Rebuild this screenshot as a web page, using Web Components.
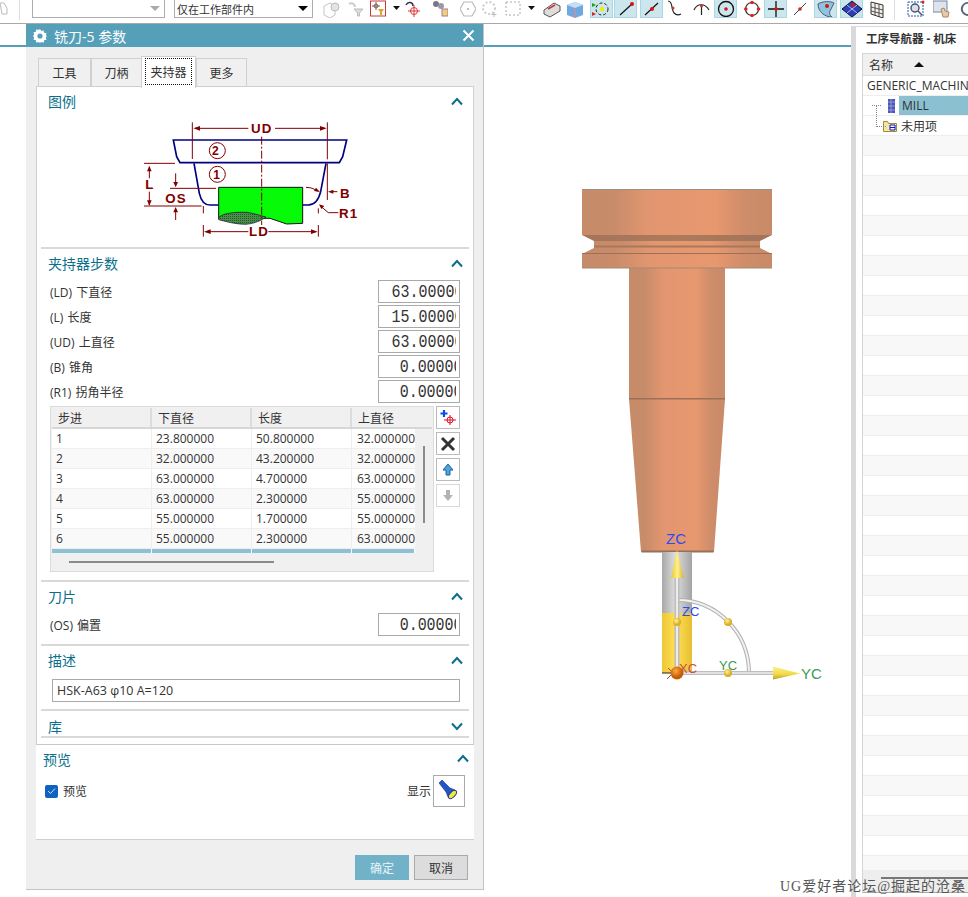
<!doctype html>
<html lang="zh">
<head>
<meta charset="utf-8">
<title>铣刀-5 参数</title>
<style>
	html, body { margin: 0; padding: 0; background: #fff; }
	body { font: 12px "Open Sans", "Noto Sans CJK SC", sans-serif; color: #333; }
</style>
</head>
<body>
<ug-app>
	<ug-toolbar></ug-toolbar>
	<ug-workspace>
		<cad-view></cad-view>
		<op-nav></op-nav>
	</ug-workspace>
	<tool-dialog slot="over" heading="铣刀-5 参数">
		<holder-diagram></holder-diagram>
		<step-table></step-table>
	</tool-dialog>
	<ug-mark slot="over">UG爱好者论坛@掘起的沧桑</ug-mark>
</ug-app>

<script>
const FONT = '"Open Sans", "Noto Sans CJK SC", sans-serif';

const chevron = (down) => `<svg width="12" height="9" viewBox="0 0 12 9"><polyline points="${down ? '1,1.5 6,7 11,1.5' : '1,7.5 6,2 11,7.5'}" fill="none" stroke="#0b6f8c" stroke-width="2"/></svg>`;

const TOOL_ICONS = {
	cubes: `<path d="M1 6 7 3l5 3v9l-5 3-6-3z" fill="none" stroke="#c4c4c4"/><circle cx="12" cy="7" r="4" fill="#e4e4e4" stroke="#bbb"/>`,
	filterGrey: `<path d="M1 4c3-2 6 0 6 3" fill="none" stroke="#ccc" stroke-width="2"/><path d="M6 9h9l-3.500 4v3h-2v-3z" fill="#ddd" stroke="#bbb"/>`,
	pointFilter: `<rect x="0.500" y="1" width="15" height="15" fill="#fff" stroke="#c8393f"/><path d="M6 2v8M2 6h8" stroke="#665" /><circle cx="6" cy="6" r="2" fill="none" stroke="#955"/><path d="M8 9h6l-2 3v3h-2v-3z" fill="#e6a22e"/>`,
	undoPoint: `<path d="M1 5c2-4 7-3 7 1" fill="none" stroke="#334" stroke-width="1.500"/><circle cx="9" cy="11" r="3.500" fill="none" stroke="#d33"/><path d="M9 5v12M3 11h12" stroke="#d33"/>`,
	gears: `<circle cx="4" cy="4" r="3" fill="#778"/><circle cx="9" cy="6" r="3" fill="#99a"/><rect x="10" y="9" width="6" height="7" fill="#eed27a" stroke="#a79"/>`,
	hex: `<path d="M4 2h8l4 7-4 7H4L0 9z" fill="none" stroke="#bbb" stroke-width="1.200"/><circle cx="8" cy="9" r="1" fill="#aaa"/>`,
	ringDots: `<circle cx="8" cy="8" r="6" fill="none" stroke="#ccc" stroke-dasharray="2 2" stroke-width="2"/><path d="M13 12v5M10.500 14.500h5" stroke="#bbb"/>`,
	rectDash: `<rect x="1" y="2" width="14" height="13" fill="none" stroke="#aaa" stroke-dasharray="2 2"/>`,
	caret: `<path d="M1 6h7L4.500 10z" fill="#111"/>`,
	box3d: `<path d="M1 10 11 3l6 3v5L7 17l-6-3z" fill="#ddd" stroke="#555"/><path d="M5 9l7-4" stroke="#c33" stroke-width="1.500"/>`,
	cubeBlue: `<path d="M0 5l8-3 8 3v10l-8 3-8-3z" fill="#6fa9e0"/><path d="M0 5l8 3 8-3-8-3z" fill="#c7dff5"/><path d="M8 8v10" stroke="#ee8888"/>`,
	snapNodes: `<circle cx="11" cy="9" r="6" fill="none" stroke="#222" stroke-dasharray="3 2"/><circle cx="11" cy="9" r="2.200" fill="#ee0"/><path d="M1 3l4 2-4 2z" fill="#1a1"/><path d="M1 12l4 2-4 2z" fill="#d22"/>`,
	lineEnd: `<path d="M5 15 17 4" stroke="#111" stroke-width="1.200"/><circle cx="17" cy="4" r="2" fill="#d11"/>`,
	lineMid: `<path d="M4 15 17 3" stroke="#111" stroke-width="1.200"/><circle cx="11" cy="9" r="2" fill="#d11"/>`,
	curve: `<path d="M1 1c5 0 3 8 6 12 2 2 5 2 7 1" fill="none" stroke="#222" stroke-width="1.200"/><circle cx="6" cy="8" r="1.500" fill="#c33"/>`,
	arcCross: `<path d="M1 10C4 3 12 3 16 10" fill="none" stroke="#222" stroke-width="1.200"/><path d="M8.500 5v10" stroke="#222" stroke-width="1.200"/><circle cx="8.500" cy="6" r="1.500" fill="#c33"/>`,
	circleCenter: `<circle cx="11" cy="9" r="7.500" fill="none" stroke="#111" stroke-width="1.300"/><circle cx="11" cy="9" r="1.800" fill="#d11"/>`,
	circleQuad: `<circle cx="8" cy="9" r="6.500" fill="none" stroke="#333" stroke-width="1.200"/><g fill="#d22"><circle cx="8" cy="2.500" r="1.800"/><circle cx="8" cy="15.500" r="1.800"/><circle cx="1.800" cy="9" r="1.800"/><circle cx="14.500" cy="9" r="1.800"/></g>`,
	cross: `<path d="M11 1v16M3 9h16" stroke="#111" stroke-width="1.300"/><circle cx="11" cy="9" r="1.800" fill="#d11"/>`,
	slash: `<path d="M1 15 13 3" stroke="#444"/><circle cx="7" cy="9" r="1.800" fill="#d22"/>`,
	faceSnap: `<path d="M3 4c5-3 12-3 16-1l-3 6c-2 3-2 6 1 8-7 0-14-5-14-13z" fill="#8cc6de" stroke="#557"/><circle cx="12" cy="6" r="2" fill="#d11"/>`,
	meshSnap: `<path d="M11 1l10 8-10 8L1 9z" fill="#2c3fb8" stroke="#113"/><path d="M6 5l10 8M16 5 6 13" stroke="#cdf" stroke-width=".8"/><circle cx="12" cy="5" r="2" fill="#d11"/>`,
	grid: `<path d="M1 2l12 3v13L1 14z" fill="#f4efe6" stroke="#333"/><path d="M5 3v12M9 4v13M1 7l12 3M1 11l12 3" stroke="#333" stroke-width=".8"/>`,
	viewSel: `<rect x="1" y="2" width="15" height="14" fill="none" stroke="#25b" stroke-dasharray="2 1"/><circle cx="8" cy="8" r="4" fill="#dde" stroke="#456" stroke-width="1.400"/><path d="M11 11l4 4" stroke="#456" stroke-width="1.500"/><circle cx="16" cy="2" r="1.500" fill="#d22"/>`,
	viewHand: `<rect x="0" y="1" width="14" height="11" fill="#dbe4f0" stroke="#789"/><path d="M8 9l2 8h5l1-5-4-1-1-3z" fill="#e8c9a8" stroke="#a86"/>`,
	rotate: `<path d="M12 3a6 6 0 1 0 4 9" fill="none" stroke="#567" stroke-width="2"/>`
};

class UgApp extends HTMLElement {
	constructor() {
		super();
		this.attachShadow({ mode: 'open' });
	}

	connectedCallback() {
		this.shadowRoot.innerHTML = `
			<style>
				:host { display: flex; flex-direction: column; position: relative; width: 968px; height: 897px; overflow: hidden; background: #fff; }
			</style>
			<slot></slot>
			<slot name="over"></slot>
		`;
	}
}

class UgToolbar extends HTMLElement {
	constructor() {
		super();
		this.attachShadow({ mode: 'open' });
	}

	// [gap before, width, icon, highlighted]
	get items() {
		return [
			[323, 18, 'cubes'], [7, 16, 'filterGrey'], [6, 16, 'pointFilter'], [6, 9, 'caret'], [4, 16, 'undoPoint'],
			[11, 16, 'gears'], [12, 16, 'hex'], [5, 16, 'ringDots'], [8, 16, 'rectDash'], [6, 8, 'caret'],
			[8, 18, 'box3d'], [6, 17, 'cubeBlue'], [6, 23, 'snapNodes', 1], [1, 23, 'lineEnd', 1], [3, 23, 'lineMid', 1],
			[4, 17, 'curve'], [9, 17, 'arcCross'], [4, 23, 'circleCenter', 1], [7, 17, 'circleQuad'], [3, 23, 'cross', 1],
			[6, 15, 'slash'], [6, 23, 'faceSnap', 1], [3, 23, 'meshSnap', 1], [7, 15, 'grid']
		];
	}

	icon([gap, width, name, on]) {
		const frame = on ? 22 : width;
		return `<span class="btn${on ? ' on' : ''}" style="margin-left:${gap}px;width:${width}px"><svg width="${frame}" height="18" viewBox="0 0 ${frame} 18">${TOOL_ICONS[name]}</svg></span>`;
	}

	connectedCallback() {
		this.shadowRoot.innerHTML = `
			<style>
				:host { display: block; height: 24px; box-sizing: border-box; border-bottom: 1px solid #a8a8a8; background: #fff; overflow: hidden; font-size: 11px; color: #333; }
				.row { display: flex; align-items: flex-start; height: 23px; position: relative; }
				.left { display: flex; position: absolute; left: 0; top: 0; height: 18px; }
				.combo { box-sizing: border-box; height: 18px; border: 1px solid #adadad; border-top: 0; display: flex; justify-content: space-between; align-items: center; padding: 0 4px 0 2px; }
				.combo i { width: 0; height: 0; border: 5px solid transparent; border-top: 5px solid #000; border-bottom: 0; }
				.combo.off i { border-top-color: #aaa; }
				.sep { width: 1px; height: 20px; background: #ddd; }
				.btn { box-sizing: border-box; height: 18px; flex: none; overflow: hidden; display: flex; justify-content: center; align-items: center; }
				.btn svg { flex: none; }
				.btn.on { background: #cbe6ec; border: 1px solid #aad7e1; border-top: 0; }
			</style>
			<div class="row">
				<div class="left">
					<svg width="8" height="18" viewBox="0 0 8 18"><path d="M0 3h4l3 5v6H2z" fill="none" stroke="#bbb"/></svg>
					<span class="sep" style="margin-left:11px"></span>
					<span class="combo off" style="width:133px;margin-left:12px"><span></span><i></i></span>
					<span class="combo" style="width:139px;margin-left:9px"><span>仅在工作部件内</span><i></i></span>
				</div>
				${this.items.map((it) => this.icon(it)).join('')}
				<span class="sep" style="margin-left:9px;flex:none"></span>
				${[[12, 'viewSel'], [8, 'viewHand'], [6, 'rotate']].map(([gap, name]) => this.icon([gap, 18, name])).join('')}
			</div>
		`;
	}
}

class UgWorkspace extends HTMLElement {
	constructor() {
		super();
		this.attachShadow({ mode: 'open' });
	}

	connectedCallback() {
		this.shadowRoot.innerHTML = `
			<style>
				:host { display: flex; flex: 1; min-height: 0; }
			</style>
			<slot></slot>
		`;
	}
}

class CadView extends HTMLElement {
	constructor() {
		super();
		this.attachShadow({ mode: 'open' });
	}

	connectedCallback() {
		this.shadowRoot.innerHTML = `
			<style>
				:host { display: block; position: relative; flex: none; width: 851px; }
				.rule { height: 2px; margin-top: 21px; background: #569fb9; }
				svg { position: absolute; left: 0; top: 0; font-family: "Liberation Sans", sans-serif; }
			</style>
			<div class="rule"></div>
			<svg width="851" height="873" viewBox="0 24 851 873">
				<defs>
					<linearGradient id="cu">
						<stop offset="0" stop-color="#c68b69"/><stop offset=".17" stop-color="#c88c6a"/>
						<stop offset=".35" stop-color="#e2966f"/><stop offset=".7" stop-color="#e8986f"/>
						<stop offset=".85" stop-color="#cf8d6a"/><stop offset="1" stop-color="#c88a68"/>
					</linearGradient>
					<linearGradient id="cuDark">
						<stop offset="0" stop-color="#a3745a"/><stop offset=".5" stop-color="#ad7a5c"/><stop offset="1" stop-color="#a2735a"/>
					</linearGradient>
					<linearGradient id="steel">
						<stop offset="0" stop-color="#a8a8a8"/><stop offset=".45" stop-color="#dedede"/><stop offset="1" stop-color="#a4a4a4"/>
					</linearGradient>
					<linearGradient id="gold">
						<stop offset="0" stop-color="#edc738"/><stop offset=".45" stop-color="#ffe052"/><stop offset="1" stop-color="#e6bf34"/>
					</linearGradient>
					<linearGradient id="headV">
						<stop offset="0" stop-color="#e6c830"/><stop offset=".5" stop-color="#fff08a"/><stop offset="1" stop-color="#d8b030"/>
					</linearGradient>
					<linearGradient id="headH" x2="0" y2="1">
						<stop offset="0" stop-color="#fff08a"/><stop offset=".6" stop-color="#f2d94a"/><stop offset="1" stop-color="#b7a02a"/>
					</linearGradient>
					<radialGradient id="ball" cx=".4" cy=".35"><stop offset="0" stop-color="#fff09a"/><stop offset="1" stop-color="#d9ae22"/></radialGradient>
					<radialGradient id="ballO" cx=".4" cy=".35"><stop offset="0" stop-color="#ffa940"/><stop offset="1" stop-color="#c55a08"/></radialGradient>
				</defs>

				<rect x="582" y="189" width="190" height="46" fill="url(#cu)"/>
				<rect x="582" y="189" width="190" height="1" fill="#9a9186"/>
				<path d="M582 235h190l-12 6H594z" fill="url(#cuDark)"/>
				<rect x="594" y="241" width="166" height="7" fill="url(#cu)"/>
				<rect x="594" y="245.500" width="166" height="2" fill="#a9785c"/>
				<path d="M594 248h166l12 6H582z" fill="url(#cu)"/>
				<rect x="582" y="253" width="190" height="1.500" fill="#9c7058"/>
				<rect x="582" y="254" width="190" height="14" fill="url(#cu)"/>
				<rect x="629" y="268" width="96" height="131" fill="url(#cu)"/>
				<rect x="582" y="267.500" width="190" height="1" fill="#a28a78"/>
				<path d="M629 399h96l-11 153h-73z" fill="url(#cu)"/>
				<rect x="629" y="398" width="96" height="1.500" fill="#9c7058"/>
				<rect x="641.500" y="550.500" width="72" height="2" fill="#96705a"/>

				<rect x="662" y="552" width="30" height="61" fill="url(#steel)"/>
				<rect x="662" y="613" width="30" height="60" fill="url(#gold)"/>
				<rect x="662" y="672.500" width="15" height="1" fill="#222"/>

				<path d="M677 600a72 73 0 0 1 72 73" fill="none" stroke="#b0b0b0" stroke-width="4"/>
				<path d="M677 600a72 73 0 0 1 72 73" fill="none" stroke="#f1f1f1" stroke-width="2"/>
				<path d="M677 673V570" stroke="#bdbdbd" stroke-width="5"/>
				<path d="M677 673V570" stroke="#ededed" stroke-width="2"/>
				<path d="M677 673h100" stroke="#bdbdbd" stroke-width="4"/>
				<path d="M677 673h100" stroke="#eeeeee" stroke-width="1.500"/>
				<path d="M677 550l-6 28h13z" fill="url(#headV)"/>
				<path d="M800 673.500l-27-7v13z" fill="url(#headH)"/>
				<circle cx="677" cy="622" r="4" fill="url(#ball)"/>
				<circle cx="728" cy="622" r="4" fill="url(#ball)"/>
				<circle cx="728" cy="673" r="4" fill="url(#ball)"/>
				<path d="M667 679l12-12M668 668l9 9" stroke="#c33" stroke-width="1"/>
				<text x="679" y="673" font-size="13" fill="#d04a4a">XC</text>
				<circle cx="677" cy="673" r="6.500" fill="url(#ballO)"/>
				<text x="666" y="544" font-size="15" fill="#2a4cf0">ZC</text>
				<text x="682" y="616" font-size="13" fill="#2a4cf0">ZC</text>
				<text x="719" y="670" font-size="13" fill="#3d9a52">YC</text>
				<text x="801" y="679" font-size="15" fill="#3d9a52">YC</text>
			</svg>
		`;
	}
}

class OpNav extends HTMLElement {
	constructor() {
		super();
		this.attachShadow({ mode: 'open' });
	}

	connectedCallback() {
		const blanks = Array.from({ length: 37 }, () => '<div class="r"></div>').join('');
		this.shadowRoot.innerHTML = `
			<style>
				:host { display: flex; flex-direction: column; flex: 1; min-width: 0; box-sizing: border-box; margin-top: 2px; border-left: 5px solid #d9d9d9; border-top: 1px solid #d9d9d9; padding-left: 6px; background: #fff; overflow: hidden; font-size: 12px; color: #333; }
				.title { height: 26px; line-height: 24px; padding-left: 4px; font-weight: 700; white-space: nowrap; font-size: 11.500px; }
				.tree { flex: 1; min-height: 0; display: flex; flex-direction: column; border-left: 1px solid #d4d4d4; border-top: 1px solid #d4d4d4; overflow: hidden; margin-bottom: 4px; }
				.head { flex: none; height: 21px; background: #f0f0f0; display: flex; align-items: center; padding-left: 6px; border-bottom: 1px solid #ddd; }
				.head i { width: 0; height: 0; margin-left: 21px; border: 5px solid transparent; border-bottom: 5px solid #111; border-top: 0; }
				.rows { flex: none; height: 794px; overflow: hidden; }
				.r { height: 20px; box-sizing: border-box; border-bottom: 1px solid #eee; display: flex; align-items: center; white-space: nowrap; }
				.r:nth-child(even) { background: #f8f8f8; }
				.r.top { padding-left: 4px; }
				.mill { padding-left: 24px; background: #fff !important; position: relative; }
				.mill b { font-weight: 400; align-self: stretch; flex: 1; display: flex; align-items: center; background: #8bc0d0; margin-left: 3px; padding-left: 3px; }
				.unused { padding-left: 20px; background: #fff !important; position: relative; }
				.unused span { margin-left: 4px; }
				.dots { position: absolute; border-left: 1px dotted #888; border-bottom: 1px dotted #888; left: 9px; width: 9px; }
				.bottom { flex: none; height: 23px; background: #eee; border-bottom: 1px solid #aaa; box-sizing: border-box; padding: 7px 0 0 18px; }
				.bottom div { height: 2px; background: #777; }
			</style>
			<div class="title">工序导航器 - 机床</div>
			<div class="tree">
				<div class="head">名称<i></i></div>
				<div class="rows">
					<div class="r top">GENERIC_MACHINE</div>
					<div class="r mill"><span class="dots" style="top:9px;height:0;border-left:0"></span>
						<svg width="9" height="16" viewBox="0 0 9 16"><rect x="1" y="1" width="7" height="14" fill="#4a55c8"/><path d="M1 4h7M1 8h7M1 12h7M4 1v14" stroke="#aab" stroke-width=".8"/></svg><b>MILL</b></div>
					<div class="r unused"><span class="dots" style="top:-10px;height:20px"></span>
						<svg width="14" height="13" viewBox="0 0 14 13"><path d="M.5 12.500v-10h4l1 2h8v8z" fill="#f6e7a0" stroke="#a08a3c"/><path d="M7 6h5v5H7zM7 8.500h5" fill="#fff" stroke="#11c"/></svg><span>未用项</span></div>
					${blanks}
				</div>
				<div class="bottom"><div></div></div>
			</div>
		`;
	}
}

class ToolDialog extends HTMLElement {
	constructor() {
		super();
		this.attachShadow({ mode: 'open' });
	}

	field(label, value) {
		return `<div class="field"><span>${label}</span><num-box>${value}</num-box></div>`;
	}

	connectedCallback() {
		this.shadowRoot.innerHTML = `
			<style>
				:host { display: flex; flex-direction: column; position: absolute; left: 26px; top: 24px; width: 458px; height: 866px; box-sizing: border-box; background: #efefef; border-right: 1px solid #c4c4c4; border-bottom: 1px solid #c4c4c4; color: #333; font-size: 12px; }
				.bar { flex: none; height: 23px; background: #569fb9; color: #fff; display: flex; align-items: center; font-size: 14px; padding: 0 8px 0 7px; }
				.bar svg.gear { margin-right: 7px; }
				.bar span { flex: 1; }
				.tabs { flex: none; display: flex; align-items: flex-end; height: 39px; padding-left: 12px; }
				.tab { box-sizing: border-box; height: 28px; border: 1px solid #d0d0d0; border-bottom: 0; display: flex; align-items: center; justify-content: center; width: 51px; background: #f0f0f0; margin-bottom: 0; }
				.tab:first-child { width: 53px; }
				.tab.sel { height: 32px; width: 55px; margin: 0 0 -2px -1px; background: #fff; position: relative; z-index: 1; padding: 1px 3px 3px; }
				.tab.sel span { flex: 1; align-self: stretch; display: flex; align-items: center; justify-content: center; border: 1px dotted #111; }
				.panel { flex: none; height: 659px; box-sizing: border-box; margin-left: 10px; width: 438px; background: #fff; border: 1px solid #cfcfcf; border-bottom: 1px solid #c8c8c8; padding: 0 4px; }
				.field { display: flex; align-items: center; justify-content: space-between; height: 25px; padding: 0 9px; word-spacing: 1px; }
				.desc { margin: 3px 9px 0 11px; height: 23px; box-sizing: border-box; border: 1px solid #aaa; padding-left: 4px; display: flex; align-items: center; font-size: 12.500px; }
				.preview { flex: none; width: 438px; height: 95px; margin-left: 10px; box-sizing: border-box; background: #fff; border-bottom: 1px solid #d0d0d0; }
				.prow { display: flex; align-items: center; padding: 0 9px; height: 32px; margin-top: 3px; }
				.check { width: 13px; height: 13px; border-radius: 2px; background: #0f62c0; display: flex; align-items: center; justify-content: center; margin-right: 5px; }
				.prow .grow { flex: 1; }
				.flash { width: 32px; height: 32px; box-sizing: border-box; border: 1px solid #aaa; margin-left: 2px; display: flex; align-items: center; justify-content: center; }
				.foot { flex: 1; display: flex; justify-content: flex-end; gap: 5px; padding: 15px 15px 0 0; }
				.foot span { box-sizing: border-box; width: 54px; height: 25px; display: flex; align-items: center; justify-content: center; }
				.ok { background: #72b2c9; color: #e8f4f8; }
				.no { background: #dcdcdc; border: 1px solid #aaa; }
			</style>
			<div class="bar">
				<svg class="gear" width="14" height="14" viewBox="0 0 14 14"><path d="M7 0l1.300 2 2.300-.7.500 2.400 2.400.5-.7 2.300L14 7l-1.200 1.500.7 2.300-2.400.5-.5 2.400-2.300-.7L7 14l-1.300-1-2.300.7-.5-2.400-2.400-.5.7-2.300L0 7l1.200-1.500-.7-2.300 2.400-.5.5-2.400 2.300.7z" fill="#fff"/><circle cx="7" cy="7" r="2.600" fill="#569fb9"/></svg>
				<span>${this.getAttribute('heading')}</span>
				<svg width="13" height="13" viewBox="0 0 13 13"><path d="M1.500 1.500l10 10M11.500 1.500l-10 10" stroke="#fff" stroke-width="2"/></svg>
			</div>
			<div class="tabs">
				<div class="tab">工具</div><div class="tab">刀柄</div>
				<div class="tab sel"><span>夹持器</span></div>
				<div class="tab">更多</div>
			</div>
			<div class="panel">
				<ug-section heading="图例" height="162"><slot name="diagram"></slot></ug-section>
				<ug-section heading="夹持器步数" height="333">
					${this.field('(LD) 下直径', '63.00000')}
					${this.field('(L) 长度', '15.00000')}
					${this.field('(UD) 上直径', '63.00000')}
					${this.field('(B) 锥角', '0.00000')}
					${this.field('(R1) 拐角半径', '0.00000')}
					<slot name="table"></slot>
				</ug-section>
				<ug-section heading="刀片" height="64">${this.field('(OS) 偏置', '0.00000')}</ug-section>
				<ug-section heading="描述" height="65"><div class="desc">HSK-A63 φ10 A=120</div></ug-section>
				<ug-section heading="库" height="27" collapsed></ug-section>
			</div>
			<div class="preview">
				<ug-section heading="预览" height="62" flat>
					<div class="prow">
						<span class="check"><svg width="9" height="8" viewBox="0 0 9 8"><path d="M1 4l2.500 2.500L8 1.500" fill="none" stroke="#cfe3fa" stroke-width="1"/></svg></span>
						<span class="grow">预览</span>
						<span>显示</span>
						<span class="flash"><svg width="24" height="24" viewBox="0 0 24 24"><path d="M2 4l3-3 8 8 5 2-7 7-2-5z" fill="#2456c8" stroke="#16307e" stroke-width=".6"/><ellipse cx="15.500" cy="15.500" rx="5" ry="2.600" transform="rotate(-45 15.500 15.500)" fill="#f1ea37" stroke="#1c3a96"/></svg></span>
					</div>
				</ug-section>
			</div>
			<div class="foot"><span class="ok">确定</span><span class="no">取消</span></div>
		`;
		// light children go to the named slots that sit inside ug-section
		this.querySelector('holder-diagram').slot = 'diagram';
		this.querySelector('step-table').slot = 'table';
	}
}

class UgSection extends HTMLElement {
	constructor() {
		super();
		this.attachShadow({ mode: 'open' });
	}

	connectedCallback() {
		const flat = this.hasAttribute('flat');
		this.shadowRoot.innerHTML = `
			<style>
				:host { display: block; box-sizing: border-box; height: ${this.getAttribute('height')}px; border-bottom: ${flat ? 0 : '2px solid #d9d9d9'}; overflow: hidden; }
				.head { box-sizing: border-box; height: ${flat ? 27 : 30}px; padding: 0 6px ${flat ? 0 : 2}px 7px; display: flex; align-items: center; justify-content: space-between; color: #0b6f8c; font-size: 14px; }
				:host([flat]) .head { padding-right: 5px; }
				:host([collapsed]) .head { padding-bottom: 0; height: 30px; }
			</style>
			<div class="head"><span>${this.getAttribute('heading')}</span>${chevron(this.hasAttribute('collapsed'))}</div>
			<slot></slot>
		`;
	}
}

class NumBox extends HTMLElement {
	constructor() {
		super();
		this.attachShadow({ mode: 'open' });
	}

	connectedCallback() {
		this.shadowRoot.innerHTML = `
			<style>
				:host { display: block; box-sizing: border-box; width: 82px; height: 23px; border: 1px solid #aaa; padding-right: 3px; background: #fff; word-spacing: 0; }
				div { display: flex; justify-content: flex-end; align-items: center; height: 100%; box-sizing: border-box; padding-top: 2px; overflow: hidden; font: 18px/19px "Liberation Mono", monospace; color: #333; }
				span { flex: none; margin-right: -7px; transform: scaleX(.833); transform-origin: right center; }
			</style>
			<div><span><slot></slot></span></div>
		`;
	}
}

class HolderDiagram extends HTMLElement {
	constructor() {
		super();
		this.attachShadow({ mode: 'open' });
	}

	connectedCallback() {
		this.shadowRoot.innerHTML = `
			<style>
				:host { display: block; height: 130px; padding-left: 79px; margin-top: -7px; }
				svg { display: block; }
				text { font: 700 40px "Liberation Sans", sans-serif; fill: #800000; letter-spacing: 3px; }
			</style>
			<svg width="260" height="135" viewBox="0 0 780 405">
				<defs>
					<pattern id="g" width="6" height="6" patternUnits="userSpaceOnUse"><rect width="6" height="6" fill="#00ff00"/><rect width="3" height="3" fill="#18ec18"/></pattern>
					<pattern id="d" width="6" height="6" patternUnits="userSpaceOnUse"><rect width="6" height="6" fill="#4c8c4c"/><rect width="3" height="3" fill="#1f5f1f"/></pattern>
				</defs>
				<path d="M296 232H548V340L500 342 450 325 296 325z" fill="url(#g)" stroke="#111" stroke-width="3"/>
				<path d="M296 322c15-12 40-16 85-15 25 4 40 10 57 14-18 14-40 20-60 22-30 0-60-8-82-14z" fill="url(#d)" stroke="#113" stroke-width="2"/>
				<g fill="none" stroke="#000080" stroke-width="5">
					<path d="M160 90H680L668 140 658 158H180L170 140z"/>
					<path d="M222 160 238 250Q246 285 270 285H296"/>
					<path d="M618 160 602 245Q592 285 565 285H548"/>
				</g>
				<g fill="none" stroke="#800000" stroke-width="3">
					<path d="M217 37V147M622 37V148M622 160V270"/>
					<path d="M225 55H385M465 55H615"/>
					<path d="M425 80V345" stroke-dasharray="24 6 6 6"/>
					<circle cx="292" cy="122" r="24"/><circle cx="292" cy="193" r="24"/>
					<path d="M72 160H165M72 288H245M150 235H288"/>
					<path d="M88 170V205M88 245V285M167 190V225M167 298V330"/>
					<path d="M250 345V380M595 345V380M250 288V310M595 295V310" />
					<path d="M258 365H385M445 365H588"/>
					<path d="M558 232C575 232 585 238 592 244"/>
					<path d="M632 245H652M606 292L625 308H655"/>
				</g>
				<g fill="#800000">
					<path d="M220 55l20-7v14zM620 55l-20-7v14zM252 365l20-7v14zM593 365l-20-7v14z"/>
					<path d="M88 168l-7 16h14zM88 287l-7-16h14zM167 232l-7-16h14zM167 291l-7 16h14z"/>
					<path d="M600 246l-18-3 6-10zM624 245l16-6v12zM597 283l16 5-9 9z"/>
				</g>
				<text x="393" y="69">UD</text>
				<text x="276" y="136" style="font-size:36px">2</text><text x="280" y="207" style="font-size:36px">1</text>
				<text x="76" y="238">L</text>
				<text x="136" y="278">OS</text>
				<text x="660" y="263">B</text>
				<text x="657" y="323">R1</text>
				<text x="387" y="379">LD</text>
			</svg>
		`;
	}
}

class StepTable extends HTMLElement {
	constructor() {
		super();
		this.attachShadow({ mode: 'open' });
	}

	get rows() {
		return [
			['1', '23.800000', '50.800000', '32.000000'],
			['2', '32.000000', '43.200000', '32.000000'],
			['3', '63.000000', '4.700000', '63.000000'],
			['4', '63.000000', '2.300000', '55.000000'],
			['5', '55.000000', '1.700000', '55.000000'],
			['6', '55.000000', '2.300000', '63.000000']
		];
	}

	connectedCallback() {
		const cols = 'grid-template-columns: 100px 100px 100px 63px';
		this.shadowRoot.innerHTML = `
			<style>
				:host { display: flex; gap: 2px; margin: 2px 0 0 9px; font: 12px ${FONT}; color: #333; }
				.box { position: relative; box-sizing: border-box; width: 384px; height: 166px; border: 1px solid #dcdcdc; background: #f0f0f0; padding: 1px; overflow: hidden; }
				.hd, .tr { display: grid; ${cols}; }
				.hd { height: 21px; box-sizing: border-box; border-bottom: 2px solid #d6d6d6; width: 380px; }
				.hd span { padding-left: 6px; border-right: 2px solid #dcdcdc; line-height: 21px; height: 19px; }
				.hd span:last-child { border: 0; }
				.tr { height: 20px; background: #fff; width: 363px; }
				.tr:nth-child(even) { background: #f9f9f9; }
				.tr span { box-sizing: border-box; line-height: 19px; padding-left: 4px; border-right: 1px solid #eee; border-bottom: 1px solid #eee; white-space: nowrap; overflow: hidden; }
				.tr span:last-child { border-right: 0; padding-left: 5px; }
				.tr.cur { height: 4px; ${cols}; }
				.tr.cur span { background: #8dc1d3; border-right: 1px solid #fff; border-bottom: 0; padding: 0; }
				.v { position: absolute; left: 372px; top: 39px; width: 2px; height: 77px; background: #8a8a8a; }
				.h { position: absolute; left: 18px; top: 154px; width: 205px; height: 2px; background: #8a8a8a; }
				.tools { display: flex; flex-direction: column; gap: 3px; }
				.tools span { box-sizing: border-box; width: 24px; height: 23px; background: #fff; border: 1px solid #bbb; display: flex; align-items: center; justify-content: center; }
				.tools span.off { border-color: #d8d8d8; }
			</style>
			<div class="box">
				<div class="hd"><span>步进</span><span>下直径</span><span>长度</span><span>上直径</span></div>
				<div>
					${this.rows.map((r) => `<div class="tr">${r.map((c) => `<span>${c}</span>`).join('')}</div>`).join('')}
					<div class="tr cur"><span></span><span></span><span></span><span></span></div>
				</div>
				<div class="v"></div><div class="h"></div>
			</div>
			<div class="tools">
				<span><svg width="18" height="18" viewBox="0 0 18 18"><path d="M5 1v7M1.500 4.500h7" stroke="#0a50e0" stroke-width="2.200"/><circle cx="11" cy="11" r="3" fill="none" stroke="#e01020"/><path d="M11 6v10M5 11h12" stroke="#e01020"/></svg></span>
				<span><svg width="16" height="16" viewBox="0 0 16 16"><path d="M2 2l12 12M14 2 2 14" stroke="#333" stroke-width="3"/></svg></span>
				<span><svg width="12" height="13" viewBox="0 0 12 13"><path d="M6 1l5 6H8v5H4V7H1z" fill="#4aa8e0" stroke="#255f96"/></svg></span>
				<span class="off"><svg width="12" height="13" viewBox="0 0 12 13"><path d="M6 12 1 6h3V1h4v5h3z" fill="#b4b4b4"/></svg></span>
			</div>
		`;
	}
}

class UgMark extends HTMLElement {
	constructor() {
		super();
		this.attachShadow({ mode: 'open' });
	}

	connectedCallback() {
		this.shadowRoot.innerHTML = `
			<style>
				:host { position: absolute; left: 780px; top: 875px; font: 14px "Liberation Serif", "Noto Sans CJK SC", serif; letter-spacing: 1px; color: #555; white-space: nowrap; }
			</style>
			<slot></slot>
		`;
	}
}

customElements.define('ug-app', UgApp);
customElements.define('ug-toolbar', UgToolbar);
customElements.define('ug-workspace', UgWorkspace);
customElements.define('cad-view', CadView);
customElements.define('op-nav', OpNav);
customElements.define('ug-section', UgSection);
customElements.define('num-box', NumBox);
customElements.define('holder-diagram', HolderDiagram);
customElements.define('step-table', StepTable);
customElements.define('tool-dialog', ToolDialog);
customElements.define('ug-mark', UgMark);
</script>
</body>
</html>
